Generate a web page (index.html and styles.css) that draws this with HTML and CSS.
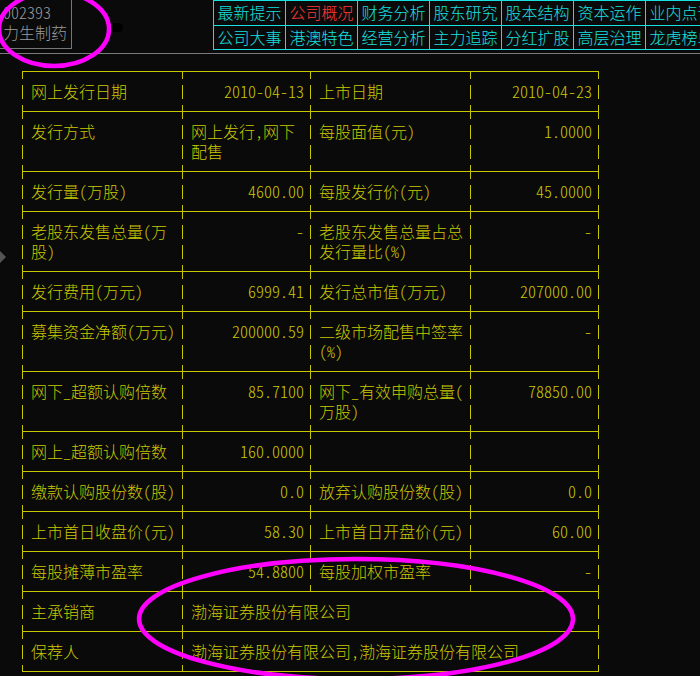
FILE: index.html
```
<!DOCTYPE html>
<html lang="zh-CN">
<head>
<meta charset="utf-8">
<title>力生制药 公司概况</title>
<link rel="stylesheet" href="styles.css">
</head>
<body>
<header class="top">
  <div class="stock">
    <div>002393</div>
    <div>力生制药</div>
  </div>
  <span class="blob"></span>
  <nav class="menu">
    <div class="grid">
      <a class="m">最新提示</a><a class="m on">公司概况</a><a class="m">财务分析</a><a class="m">股东研究</a><a class="m">股本结构</a><a class="m">资本运作</a><a class="m">业内点评</a>
      <a class="m r2">公司大事</a><a class="m r2">港澳特色</a><a class="m r2">经营分析</a><a class="m r2">主力追踪</a><a class="m r2">分红扩股</a><a class="m r2">高层治理</a><a class="m r2">龙虎榜单</a>
    </div>
  </nav>
</header>
<div class="rule"></div>
<span class="handle"></span>
<main class="tbl">
  <div class="row"><div class="c">网上发行日期</div><div class="c v">2010-04-13</div><div class="c">上市日期</div><div class="c v">2010-04-23</div></div>
  <div class="row"><div class="c">发行方式</div><div class="c">网上发行,网下<br>配售</div><div class="c">每股面值(元)</div><div class="c v">1.0000</div></div>
  <div class="row"><div class="c">发行量(万股)</div><div class="c v">4600.00</div><div class="c">每股发行价(元)</div><div class="c v">45.0000</div></div>
  <div class="row"><div class="c">老股东发售总量(万<br>股)</div><div class="c v">-</div><div class="c">老股东发售总量占总<br>发行量比(%)</div><div class="c v">-</div></div>
  <div class="row"><div class="c">发行费用(万元)</div><div class="c v">6999.41</div><div class="c">发行总市值(万元)</div><div class="c v">207000.00</div></div>
  <div class="row"><div class="c">募集资金净额(万元)</div><div class="c v">200000.59</div><div class="c">二级市场配售中签率<br>(%)</div><div class="c v">-</div></div>
  <div class="row"><div class="c">网下_超额认购倍数</div><div class="c v">85.7100</div><div class="c">网下_有效申购总量(<br>万股)</div><div class="c v">78850.00</div></div>
  <div class="row"><div class="c">网上_超额认购倍数</div><div class="c v">160.0000</div><div class="c"></div><div class="c v"></div></div>
  <div class="row"><div class="c">缴款认购股份数(股)</div><div class="c v">0.0</div><div class="c">放弃认购股份数(股)</div><div class="c v">0.0</div></div>
  <div class="row"><div class="c">上市首日收盘价(元)</div><div class="c v">58.30</div><div class="c">上市首日开盘价(元)</div><div class="c v">60.00</div></div>
  <div class="row"><div class="c">每股摊薄市盈率</div><div class="c v">54.8800</div><div class="c">每股加权市盈率</div><div class="c v">-</div></div>
  <div class="row"><div class="c">主承销商</div><div class="c span">渤海证券股份有限公司</div></div>
  <div class="row"><div class="c">保荐人</div><div class="c span">渤海证券股份有限公司,渤海证券股份有限公司</div></div>
</main>
<svg class="marks" width="700" height="676" viewBox="0 0 700 676" aria-hidden="true">
  <ellipse cx="54" cy="29" rx="55" ry="37" fill="none" stroke="#ff00ff" stroke-width="4.5"/>
  <ellipse cx="356" cy="619" rx="217" ry="60" fill="none" stroke="#ff00ff" stroke-width="4.5"/>
</svg>
</body>
</html>
```
FILE: styles.css
```
* { box-sizing: border-box; }
html, body {
  margin: 0;
  padding: 0;
  background: #0a0a0a;
  overflow: hidden;
}
body {
  width: 700px;
  height: 676px;
  position: relative;
  font-family: "Noto Sans CJK SC", "Noto Sans", sans-serif;
  font-size: 16px;
  font-weight: 300;
  font-feature-settings: "hwid" 1;
  --y: #c8c800;
  --cy: #18e0e0;
}

.top {
  display: flex;
  height: 50px;
}
.stock {
  width: 72px;
  height: 49px;
  flex: none;
  border-right: 1px solid #777;
  border-bottom: 1px solid #777;
  padding: 2px 0 0 3px;
  color: #9a9a9a;
  line-height: 20px;
}
.blob {
  flex: none;
  width: 13px;
  height: 9px;
  margin: 23px 0 0 38px;
  background: #000;
  border-radius: 5px;
}
.menu {
  flex: 1;
  min-width: 0;
  margin-left: 90px;
  overflow: hidden;
  height: 50px;
}
.grid {
  display: grid;
  grid-template-columns: repeat(7, 72px);
  grid-template-rows: 25px 24px;
  width: 504px;
  border-bottom: 1px solid var(--cy);
}
.m {
  display: block;
  border-left: 1px solid var(--cy);
  border-top: 1px solid var(--cy);
  color: var(--cy);
  text-align: center;
  line-height: 23px;
  white-space: nowrap;
}
.m.r2 { line-height: 22px; }
.m.on { color: #ff3a3a; }

.rule {
  height: 1px;
  margin-top: 3px;
  background: #7a7a7a;
}

.handle {
  position: absolute;
  left: 0;
  top: 251px;
  width: 0;
  height: 0;
  border-left: 6px solid #555;
  border-top: 6px solid transparent;
  border-bottom: 6px solid transparent;
}

.tbl {
  display: block;
  width: 577px;
  margin: 17px 0 0 22px;
  padding-right: 1px;
  border-bottom: 1px solid var(--y);
  background: linear-gradient(var(--y) 14px, transparent 14px) right 14px / 1px 20px repeat-y;
  color: var(--y);
}
.row {
  display: grid;
  grid-template-columns: 160px 128px 160px 128px;
}
.c {
  padding: 10px 6px 10px 9px;
  line-height: 20px;
  white-space: nowrap;
  background:
    linear-gradient(var(--y), var(--y)) 0 0 / 100% 1px no-repeat,
    linear-gradient(var(--y) 14px, transparent 14px) 0 14px / 1px 20px repeat-y;
}
.c.v { text-align: right; }
.c.span { grid-column: span 3; }

.marks {
  position: absolute;
  left: 0;
  top: 0;
  pointer-events: none;
}
```
